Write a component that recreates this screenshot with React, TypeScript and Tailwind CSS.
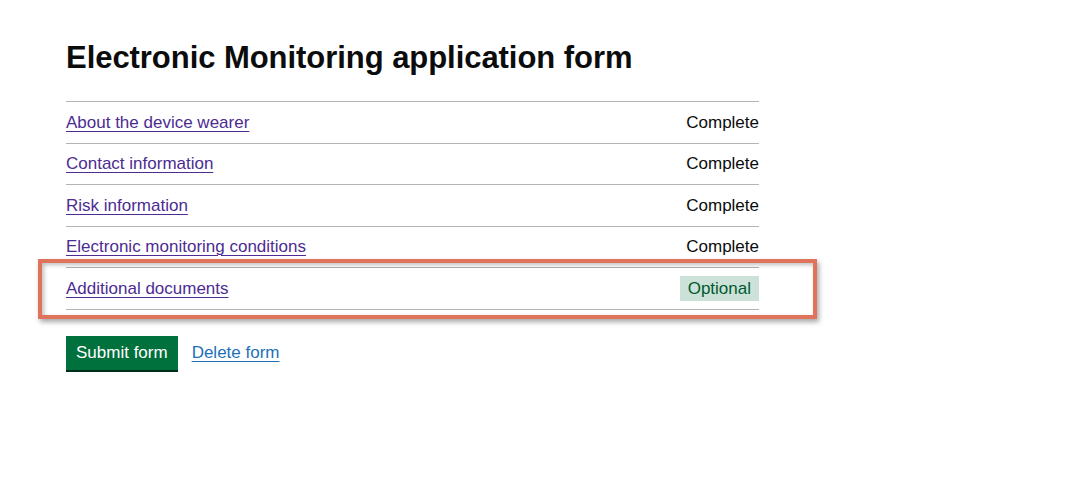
const tasks = [
  { label: "About the device wearer", status: "Complete" },
  { label: "Contact information", status: "Complete" },
  { label: "Risk information", status: "Complete" },
  { label: "Electronic monitoring conditions", status: "Complete" },
  { label: "Additional documents", status: "Optional" },
];

export default function App() {
  return (
    <div className="min-h-[493px] bg-white font-['Liberation_Sans',Arial,sans-serif] text-[#0b0c0c]">
      <div className="relative pl-[66px] pt-[38px]">
        <h1 className="text-[31px] leading-[40px] font-bold tracking-[-0.05px]">
          Electronic Monitoring application form
        </h1>

        <ul className="mt-[23px] w-[693px] border-t border-[#b1b4b6]">
          {tasks.map((task) => (
            <li
              key={task.label}
              className="flex h-[41.5px] items-center justify-between border-b border-[#b1b4b6] text-[17px]"
            >
              <a
                href="#"
                className="text-[#4c2c92] underline decoration-1 underline-offset-[3px]"
              >
                {task.label}
              </a>
              {task.status === "Optional" ? (
                <span className="bg-[#cce2d8] px-[8px] py-[2px] leading-[21px] text-[#005a30]">
                  {task.status}
                </span>
              ) : (
                <span>{task.status}</span>
              )}
            </li>
          ))}
        </ul>

        <div className="mt-[26px] flex items-center gap-[14px]">
          <button className="h-[34px] bg-[#00703c] px-[10px] pt-[1px] text-[17px] text-white shadow-[0_2px_0_#002d18]">
            Submit form
          </button>
          <a
            href="#"
            className="pt-[1px] text-[17px] text-[#1d70b8] underline decoration-1 underline-offset-[3px]"
          >
            Delete form
          </a>
        </div>

        {/* annotation around the last row */}
        <div className="pointer-events-none absolute left-[38px] top-[259px] h-[60px] w-[779px] border-4 border-[#e0735c] shadow-[2px_3px_5px_rgba(0,0,0,0.35),inset_2px_2px_4px_rgba(0,0,0,0.25)]" />
      </div>
    </div>
  );
}
